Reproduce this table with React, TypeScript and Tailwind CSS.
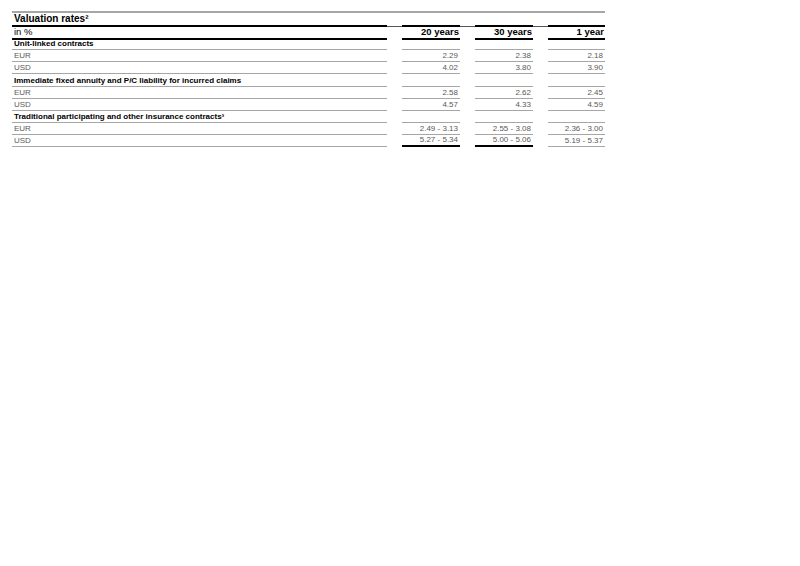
import React from "react";

type Row =
  | { kind: "section"; label: string; h?: string }
  | { kind: "data"; label: string; v: [string, string, string]; last?: boolean };

const rows: Row[] = [
  { kind: "section", label: "Unit-linked contracts" },
  { kind: "data", label: "EUR", v: ["2.29", "2.38", "2.18"] },
  { kind: "data", label: "USD", v: ["4.02", "3.80", "3.90"] },
  { kind: "section", label: "Immediate fixed annuity and P/C liability for incurred claims", h: "h-[13px]" },
  { kind: "data", label: "EUR", v: ["2.58", "2.62", "2.45"] },
  { kind: "data", label: "USD", v: ["4.57", "4.33", "4.59"] },
  { kind: "section", label: "Traditional participating and other insurance contracts³" },
  { kind: "data", label: "EUR", v: ["2.49 - 3.13", "2.55 - 3.08", "2.36 - 3.00"] },
  { kind: "data", label: "USD", v: ["5.27 - 5.34", "5.00 - 5.06", "5.19 - 5.37"], last: true },
];

const grid = "grid grid-cols-[375px_15px_58px_15px_58px_15px_57px]";

export default function App() {
  return (
    <div
      className="w-[800px] h-[566px] bg-white pt-[11px] pl-[12px]"
      style={{ fontFamily: '"Liberation Sans", Arial, sans-serif' }}
    >
      <div className="w-[593px]">
        {/* Title row */}
        <div className={`${grid} border-t-2 border-[#a6a6a6] h-[16px]`}>
          <div className="border-b-2 border-black flex items-end pl-[2px] pb-[1px] text-[10px] font-bold leading-none text-black">
            Valuation rates²
          </div>
          <div className="border-b border-[#555]" />
          <div className="border-b-2 border-black" />
          <div className="border-b border-[#555]" />
          <div className="border-b-2 border-black" />
          <div className="border-b border-[#555]" />
          <div className="border-b-2 border-black" />
        </div>
        {/* Header row */}
        <div className={`${grid} h-[11px]`}>
          <div className="border-b-2 border-black flex items-end pl-[2px] pb-[1px] text-[9.5px] leading-none text-black">
            in %
          </div>
          <div />
          <div className="border-b-2 border-black flex items-end justify-end pr-[1px] pb-[1px] text-[9.5px] font-bold leading-none text-black">
            20 years
          </div>
          <div />
          <div className="border-b-2 border-black flex items-end justify-end pr-[1px] pb-[1px] text-[9.5px] font-bold leading-none text-black">
            30 years
          </div>
          <div />
          <div className="border-b-2 border-black flex items-end justify-end pr-[1px] pb-[1px] text-[9.5px] font-bold leading-none text-black">
            1 year
          </div>
        </div>
        {rows.map((r, i) =>
          r.kind === "section" ? (
            <div key={i} className={`${grid} ${r.h ?? "h-[12px]"}`}>
              <div className="border-b border-[#a6a6a6] flex items-end pl-[2px] pb-[1px] text-[8px] font-bold leading-none text-black whitespace-nowrap">
                {r.label}
              </div>
              <div />
              <div className="border-b border-[#a6a6a6]" />
              <div />
              <div className="border-b border-[#a6a6a6]" />
              <div />
              <div className="border-b border-[#a6a6a6]" />
            </div>
          ) : (
            <div key={i} className={`${grid} h-[12px]`}>
              <div className="border-b border-[#a6a6a6] flex items-end pl-[2px] pb-[1px] text-[8px] leading-none text-[#5a5a5a]">
                {r.label}
              </div>
              <div />
              <div
                className={`${r.last ? "border-b-2 border-black" : "border-b border-[#a6a6a6]"} flex items-end justify-end pr-[2px] pb-[1px] text-[8px] leading-none text-[#5a5a5a]`}
              >
                {r.v[0]}
              </div>
              <div />
              <div
                className={`${r.last ? "border-b-2 border-black" : "border-b border-[#a6a6a6]"} flex items-end justify-end pr-[2px] pb-[1px] text-[8px] leading-none text-[#5a5a5a]`}
              >
                {r.v[1]}
              </div>
              <div />
              <div className="border-b border-[#a6a6a6] flex items-end justify-end pr-[2px] pb-[1px] text-[8px] leading-none text-[#5a5a5a]">
                {r.v[2]}
              </div>
            </div>
          )
        )}
      </div>
    </div>
  );
}
